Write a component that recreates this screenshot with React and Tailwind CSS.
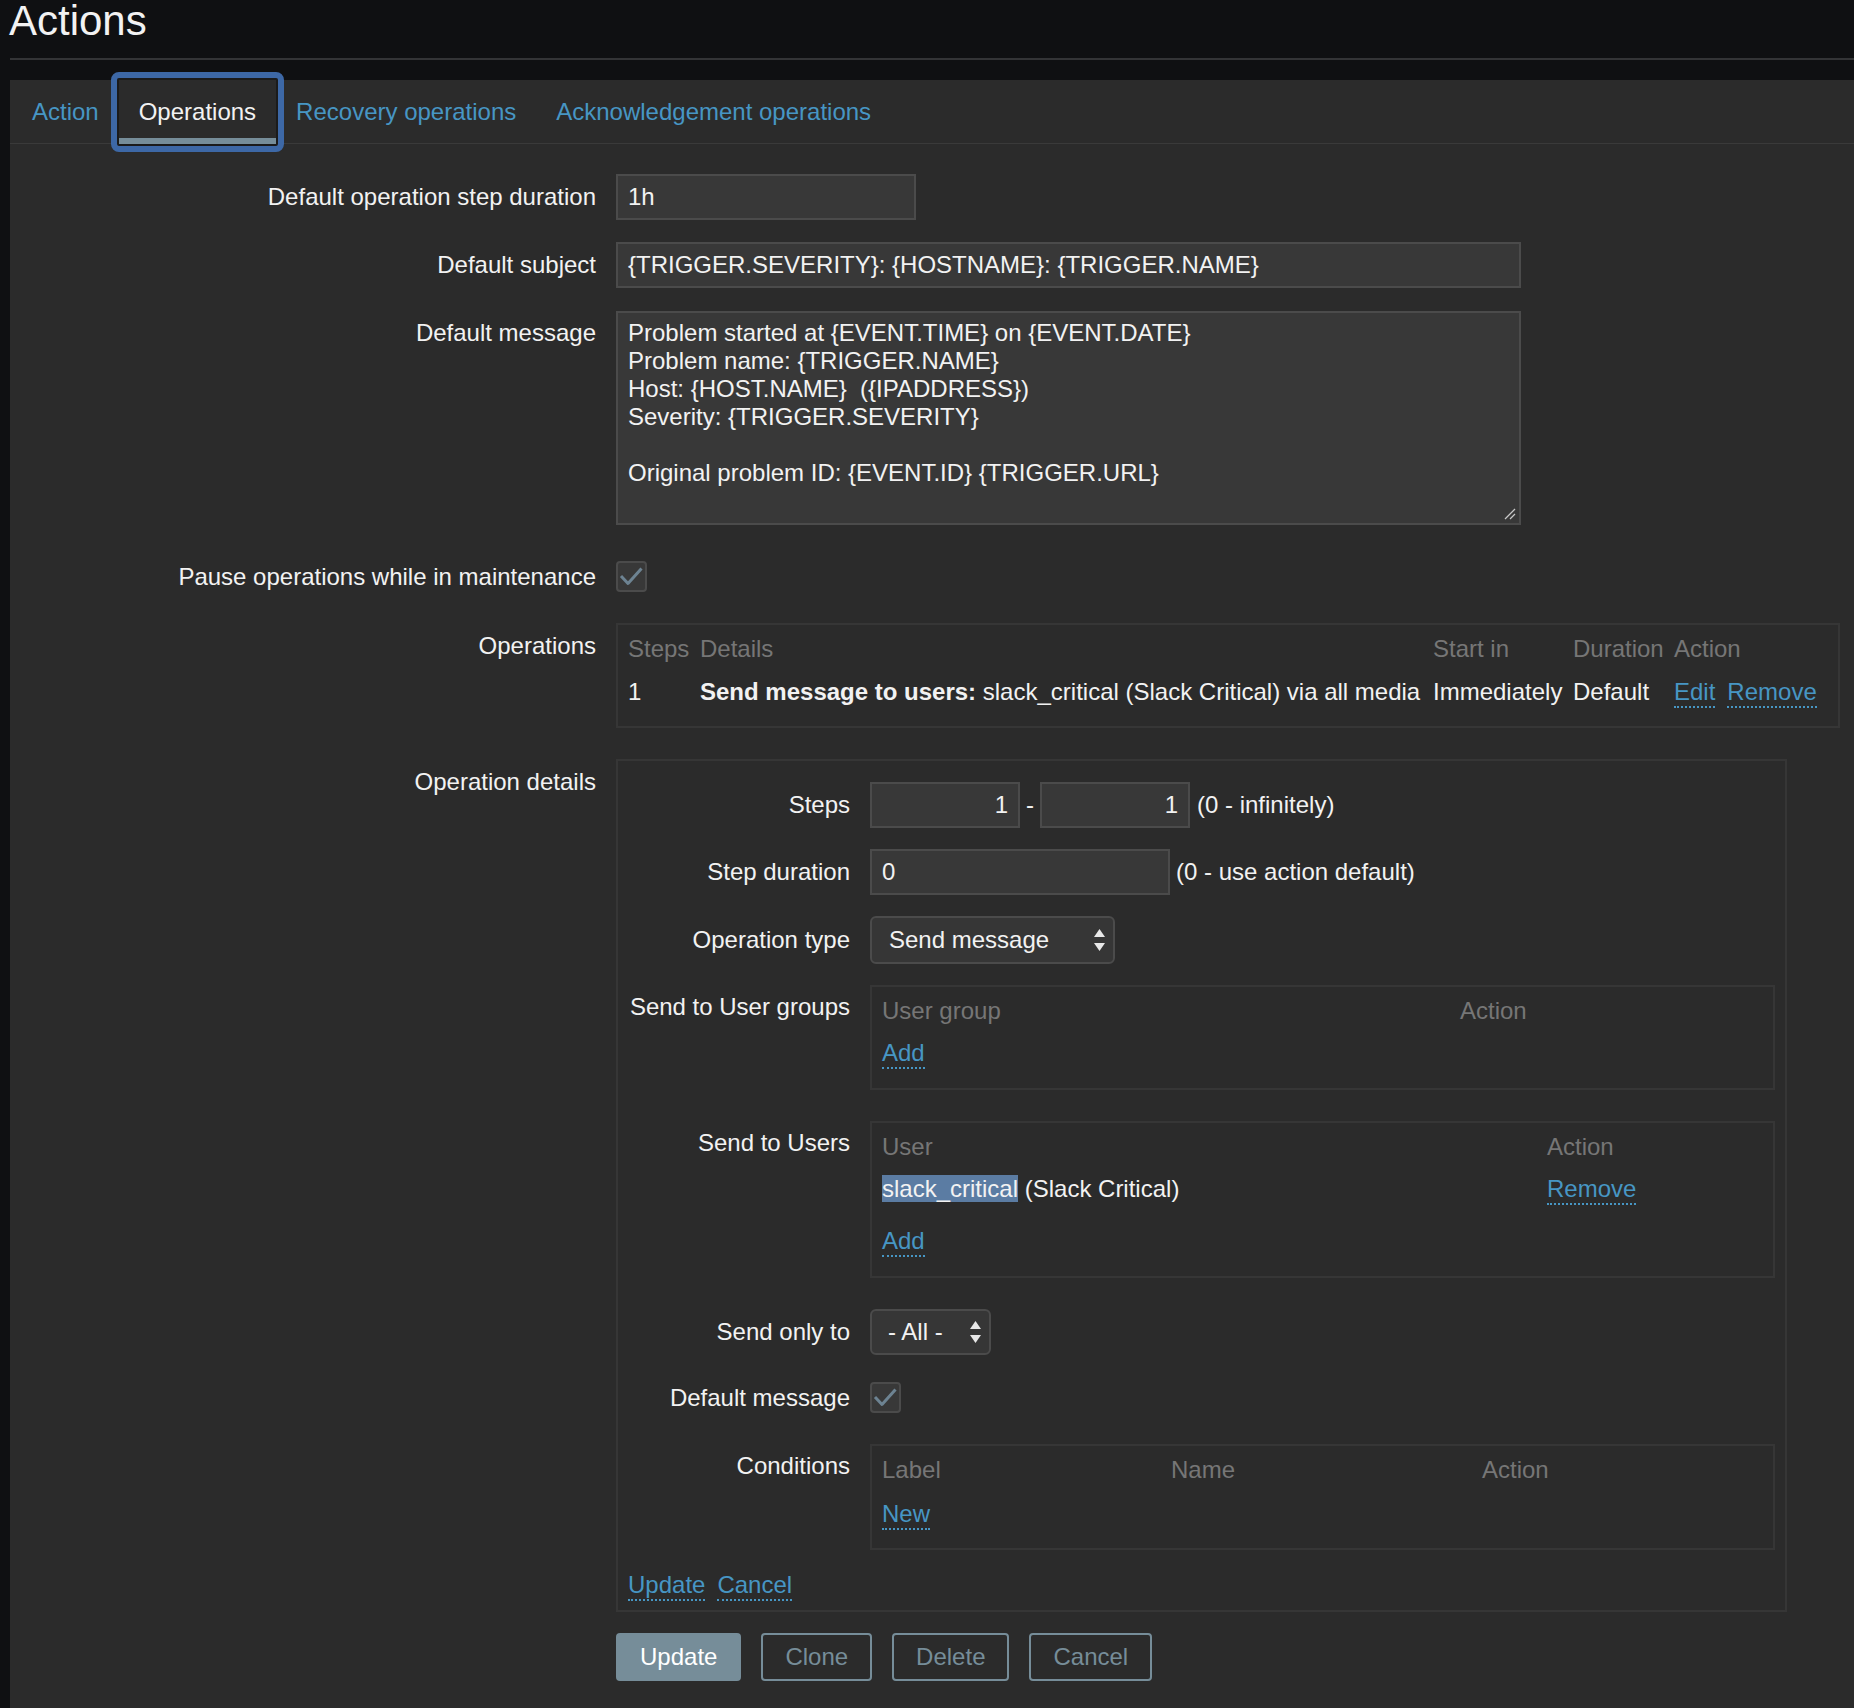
import React from "react";

const LINK = "text-[#4796c4] border-b-2 border-dotted border-[#4796c4] cursor-pointer";
const INPUT = "h-[46px] border-2 border-[#4b4b4b] bg-[#383838] flex items-center";
const BOX = "border-2 border-[#363636]";
const HEAD = "text-[#767676]";

function Check() {
  return (
    <div className="w-[31px] h-[31px] rounded-[4px] border-2 border-[#4b4b4b] bg-[#383838] flex items-center justify-center">
      <svg width="25" height="19" viewBox="0 0 25 19">
        <path d="M2 9 L9 16.5 L22.5 1.5" fill="none" stroke="#6d8392" strokeWidth="3" strokeLinejoin="round" />
      </svg>
    </div>
  );
}

function Arrows() {
  return (
    <svg width="11" height="22" viewBox="0 0 11 22">
      <polygon points="5.5,0 11,8 0,8" fill="#e8e8e8" />
      <polygon points="0,14 11,14 5.5,22" fill="#e8e8e8" />
    </svg>
  );
}

function Tab({ children, active }) {
  if (active) {
    return (
      <div className="relative flex items-center px-[20px] h-[64px] text-[#f2f2f2] shadow-[inset_0_-6px_0_#768d99]">
        <span className="pointer-events-none absolute -inset-[8px] rounded-[8px] border-[6px] border-[#3d68a6] shadow-[inset_0_0_0_2px_#1b1b1b]" />
        {children}
      </div>
    );
  }
  return <div className="flex items-center px-[20px] h-[63px] text-[#4796c4]">{children}</div>;
}

function Row({ label, labelClass = "", className = "", children }) {
  return (
    <div className={"flex " + className}>
      <div className={"w-[586px] shrink-0 text-right " + labelClass}>{label}</div>
      <div className="ml-[20px]">{children}</div>
    </div>
  );
}

function IRow({ label, labelClass = "", className = "", children }) {
  return (
    <div className={"flex " + className}>
      <div className={"w-[222px] shrink-0 text-right whitespace-nowrap " + labelClass}>{label}</div>
      <div className="ml-[20px]">{children}</div>
    </div>
  );
}

const MESSAGE = `Problem started at {EVENT.TIME} on {EVENT.DATE}
Problem name: {TRIGGER.NAME}
Host: {HOST.NAME}  ({IPADDRESS})
Severity: {TRIGGER.SEVERITY}

Original problem ID: {EVENT.ID} {TRIGGER.URL}`;

export default function App() {
  return (
    <div className="min-h-[1708px] flex flex-col bg-[#0f1012] text-[#f2f2f2] font-['Liberation_Sans',Arial,sans-serif] text-[24px] leading-[28px]">
      <div className="h-[80px] pl-[10px] shrink-0">
        <h1 className="-ml-[1px] h-[42px] text-[42px] leading-[42px] font-normal">Actions</h1>
        <div className="mt-[16px] h-[2px] bg-[#333436]" />
      </div>

      <div className="ml-[10px] flex-1 bg-[#2b2b2b] pb-[20px]">
        <div className="flex h-[64px] border-b border-[#3a3a3a] pl-[2px]">
          <Tab>Action</Tab>
          <Tab active>Operations</Tab>
          <Tab>Recovery operations</Tab>
          <Tab>Acknowledgement operations</Tab>
        </div>

        <div className="pt-[30px]">
          <Row label="Default operation step duration" labelClass="leading-[46px]">
            <div className={INPUT + " w-[300px] pl-[10px]"}>1h</div>
          </Row>

          <Row label="Default subject" labelClass="leading-[46px]" className="mt-[22px]">
            <div className={INPUT + " w-[905px] pl-[10px]"}>{"{TRIGGER.SEVERITY}: {HOSTNAME}: {TRIGGER.NAME}"}</div>
          </Row>

          <Row label="Default message" labelClass="pt-[8px]" className="mt-[23px]">
            <div className="relative w-[905px] h-[214px] border-2 border-[#4b4b4b] bg-[#383838] pl-[10px] pt-[6px] whitespace-pre">
              {MESSAGE}
              <svg className="absolute right-[3px] bottom-[3px]" width="12" height="12" viewBox="0 0 12 12">
                <line x1="11" y1="1" x2="1" y2="11" stroke="#c8c8c8" strokeWidth="1.3" />
                <line x1="11" y1="6" x2="6" y2="11" stroke="#c8c8c8" strokeWidth="1.3" />
              </svg>
            </div>
          </Row>

          <Row label="Pause operations while in maintenance" labelClass="leading-[31px]" className="mt-[36px]">
            <Check />
          </Row>

          <Row label="Operations" labelClass="pt-[9px]" className="mt-[31px]">
            <div className={BOX + " w-[1224px] h-[105px] pl-[10px] pt-[10px]"}>
              <div className={"grid grid-cols-[72px_733px_140px_101px_1fr] " + HEAD}>
                <div>Steps</div>
                <div>Details</div>
                <div>Start in</div>
                <div>Duration</div>
                <div>Action</div>
              </div>
              <div className="mt-[15px] grid grid-cols-[72px_733px_140px_101px_1fr] whitespace-nowrap">
                <div>1</div>
                <div>
                  <span className="font-bold">Send message to users:</span> slack_critical (Slack Critical) via all media
                </div>
                <div>Immediately</div>
                <div>Default</div>
                <div className="flex gap-[12px] items-start">
                  <span className={LINK}>Edit</span>
                  <span className={LINK}>Remove</span>
                </div>
              </div>
            </div>
          </Row>

          <Row label="Operation details" labelClass="pt-[9px]" className="mt-[31px]">
            <div className={BOX + " w-[1171px] pl-[10px] pt-[21px] pb-[9px]"}>
              <IRow label="Steps" labelClass="leading-[46px]">
                <div className="flex items-center">
                  <div className={INPUT + " w-[150px] justify-end pr-[10px]"}>1</div>
                  <span className="mx-[6px]">-</span>
                  <div className={INPUT + " w-[150px] justify-end pr-[10px]"}>1</div>
                  <span className="ml-[7px]">(0 - infinitely)</span>
                </div>
              </IRow>

              <IRow label="Step duration" labelClass="leading-[46px]" className="mt-[21px]">
                <div className="flex items-center">
                  <div className={INPUT + " w-[300px] pl-[10px]"}>0</div>
                  <span className="ml-[6px]">(0 - use action default)</span>
                </div>
              </IRow>

              <IRow label="Operation type" labelClass="leading-[48px]" className="mt-[21px]">
                <div className="w-[245px] h-[48px] rounded-[6px] border-2 border-[#4b4b4b] bg-[#363636] flex items-center justify-between pl-[17px] pr-[8px]">
                  <span>Send message</span>
                  <Arrows />
                </div>
              </IRow>

              <IRow label="Send to User groups" labelClass="pt-[8px]" className="mt-[21px]">
                <div className={BOX + " w-[905px] h-[105px] pl-[10px] pt-[10px]"}>
                  <div className={"grid grid-cols-[578px_1fr] " + HEAD}>
                    <div>User group</div>
                    <div>Action</div>
                  </div>
                  <div className="mt-[14px] flex">
                    <span className={LINK}>Add</span>
                  </div>
                </div>
              </IRow>

              <IRow label="Send to Users" labelClass="pt-[8px]" className="mt-[31px]">
                <div className={BOX + " w-[905px] h-[157px] pl-[10px] pt-[10px]"}>
                  <div className={"grid grid-cols-[665px_1fr] " + HEAD}>
                    <div>User</div>
                    <div>Action</div>
                  </div>
                  <div className="mt-[14px] grid grid-cols-[665px_1fr]">
                    <div>
                      <span className="bg-[#5b7ca3]">slack_critical</span> (Slack Critical)
                    </div>
                    <div className="flex items-start">
                      <span className={LINK}>Remove</span>
                    </div>
                  </div>
                  <div className="mt-[22px] flex">
                    <span className={LINK}>Add</span>
                  </div>
                </div>
              </IRow>

              <IRow label="Send only to" labelClass="leading-[46px]" className="mt-[31px]">
                <div className="w-[121px] h-[46px] rounded-[6px] border-2 border-[#4b4b4b] bg-[#363636] flex items-center justify-between pl-[16px] pr-[8px]">
                  <span>- All -</span>
                  <Arrows />
                </div>
              </IRow>

              <IRow label="Default message" labelClass="leading-[31px]" className="mt-[27px]">
                <Check />
              </IRow>

              <IRow label="Conditions" labelClass="pt-[8px]" className="mt-[31px]">
                <div className={BOX + " w-[905px] h-[106px] pl-[10px] pt-[10px]"}>
                  <div className={"grid grid-cols-[289px_311px_1fr] " + HEAD}>
                    <div>Label</div>
                    <div>Name</div>
                    <div>Action</div>
                  </div>
                  <div className="mt-[16px] flex">
                    <span className={LINK}>New</span>
                  </div>
                </div>
              </IRow>

              <div className="mt-[21px] flex gap-[12px]">
                <span className={LINK}>Update</span>
                <span className={LINK}>Cancel</span>
              </div>
            </div>

            <div className="mt-[21px] flex gap-[20px]">
              <div className="h-[48px] px-[24px] rounded-[4px] bg-[#768d99] text-white flex items-center">Update</div>
              <div className="h-[48px] px-[22px] rounded-[4px] border-2 border-[#768d99] text-[#768d99] flex items-center">Clone</div>
              <div className="h-[48px] px-[22px] rounded-[4px] border-2 border-[#768d99] text-[#768d99] flex items-center">Delete</div>
              <div className="h-[48px] px-[22px] rounded-[4px] border-2 border-[#768d99] text-[#768d99] flex items-center">Cancel</div>
            </div>
          </Row>
        </div>
      </div>
    </div>
  );
}
